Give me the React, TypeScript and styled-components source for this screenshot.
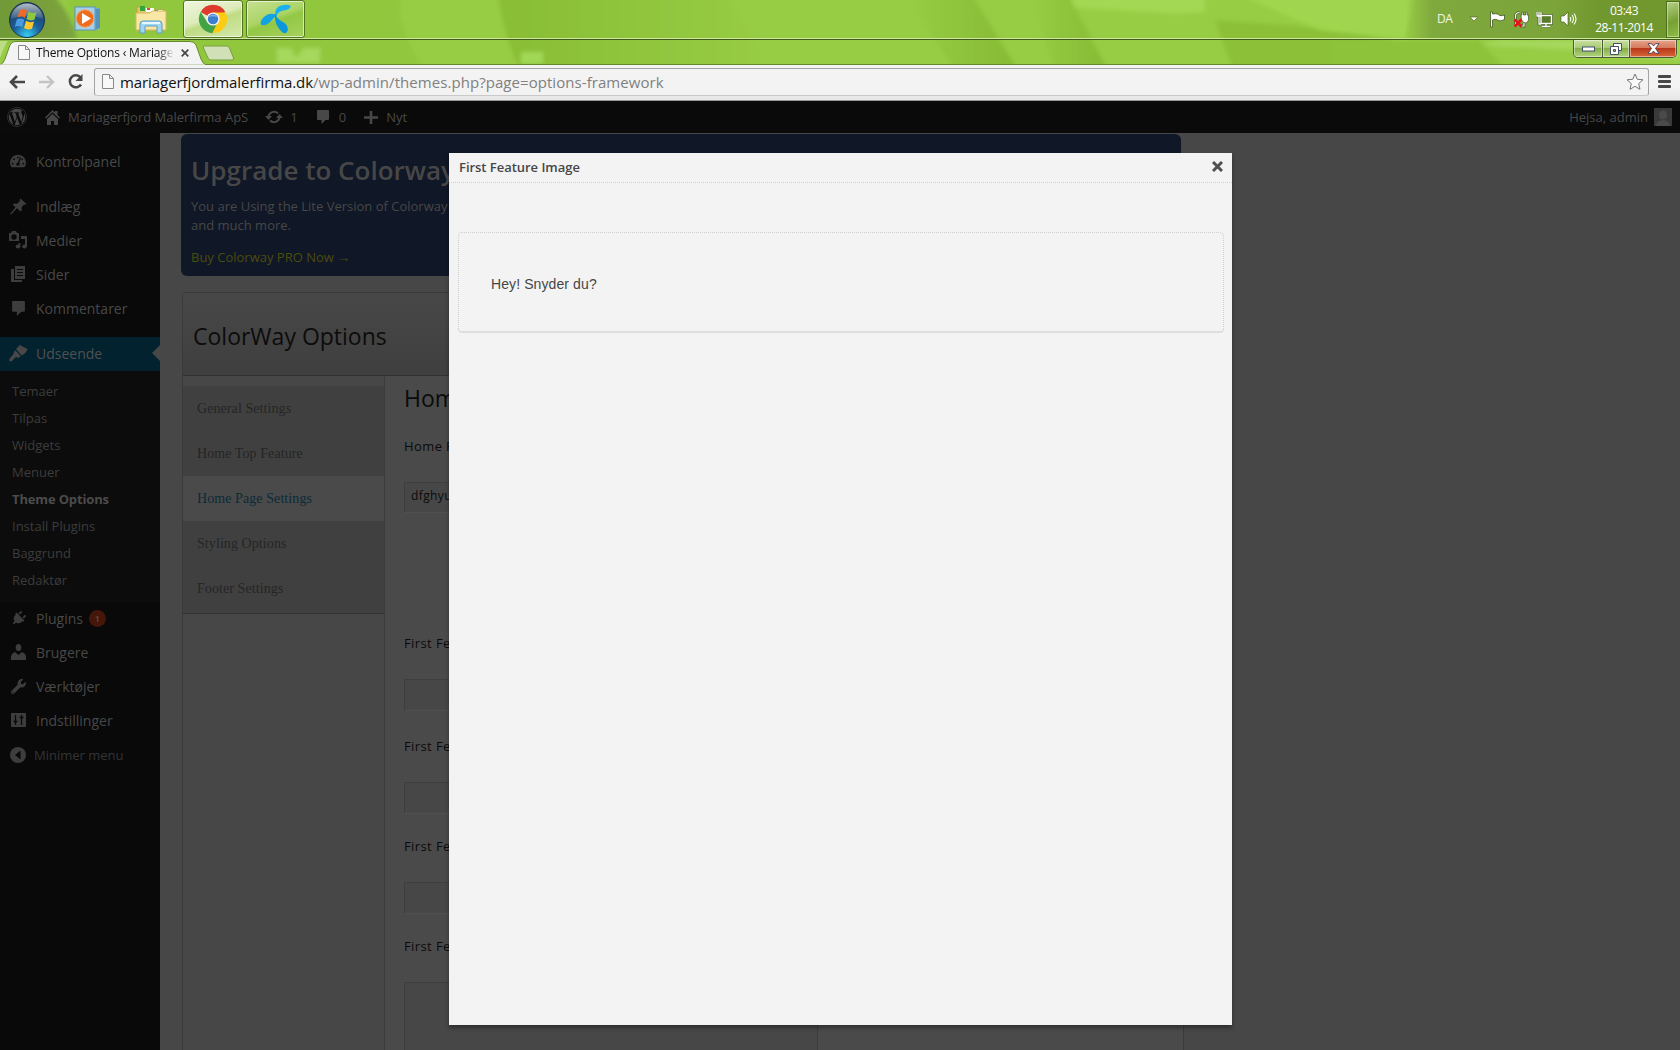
import React from "react";
import styled, { createGlobalStyle, css } from "styled-components";
import { FaWordpress, FaTachometerAlt, FaPlug, FaWrench } from "react-icons/fa";

const Global = createGlobalStyle`
  * { box-sizing: border-box; }
  html, body { margin: 0; padding: 0; background: #474747; overflow: hidden; }
  body { font-family: "Open Sans", "Noto Sans", sans-serif; }
  svg { display: block; flex: none; }
`;

const Desktop = styled.div`
  width: 1680px;
  height: 1050px;
  display: flex;
  flex-direction: column;
  overflow: hidden;
`;

/* ---------- glass frame: taskbar and title strip ---------- */
const Glass = styled.div`
  position: relative;
  height: 65px;
  flex: none;
  background: #97cc45;
`;
const Wallpaper = styled.svg`
  position: absolute;
  inset: 0;
`;
const Taskbar = styled.div`
  position: relative;
  height: 40px;
  display: flex;
  align-items: center;
  border-bottom: 1px solid #405c14;
  box-shadow: inset 0 -1px 0 #cfe8a0;
  padding: 0 0 1px 8px;
`;
const TaskSlot = styled.div<{ $w: number }>`
  width: ${(p) => p.$w}px;
  height: 38px;
  display: flex;
  align-items: center;
  justify-content: center;
`;
const TaskButton = styled(TaskSlot)<{ $active?: boolean }>`
  margin-right: 3px;
  border: 1px solid #54751f;
  border-radius: 3px;
  box-shadow: inset 0 0 0 1px rgba(255, 255, 255, 0.6);
  background: ${(p) =>
    p.$active
      ? "linear-gradient(160deg,#f0f6df 0%,#dcebb9 45%,#bfdc83 55%,#d5e8ac 100%)"
      : "linear-gradient(160deg,#c5e092 0%,#abd466 45%,#93c744 55%,#a7d25e 100%)"};
`;
const Tray = styled.div`
  margin-left: auto;
  height: 38px;
  display: flex;
  align-items: center;
  color: #fff;
  font-size: 12px;
`;
const Lang = styled.span`
  width: 32px;
  font-size: 12px;
  letter-spacing: -0.5px;
  color: #f0f7e0;
  padding-bottom: 2px;
`;
const TrayIcons = styled.div`
  display: flex;
  align-items: center;
  gap: 7px;
  margin-right: 17px;
`;
const Clock = styled.div`
  width: 60px;
  margin-right: 12px;
  text-align: center;
  line-height: 17px;
  font-size: 12px;
  letter-spacing: -0.5px;
`;
const ShowDesktop = styled.div`
  width: 14px;
  height: 37px;
  border: 1px solid #4d6e1c;
  box-shadow: inset 0 0 0 1px rgba(220, 240, 180, 0.55);
  background: linear-gradient(160deg, #b6cf8a, #76a033 55%, #8fbc48);
`;

const TitleStrip = styled.div`
  position: relative;
  height: 25px;
  display: flex;
  box-shadow: inset 0 -1px 0 #62892c;
`;
const TabShape = styled.svg`
  position: absolute;
  left: 0;
  top: 0;
`;
const Tab = styled.div`
  position: relative;
  width: 205px;
  height: 25px;
  padding: 0 0 0 18px;
  display: flex;
  align-items: center;
  font-size: 12px;
  color: #111;
`;
const TabTitle = styled.span`
  width: 138px;
  margin: 0 7px 0 6px;
  white-space: nowrap;
  letter-spacing: -0.17px;
  mask-image: linear-gradient(90deg, #000 122px, transparent 138px);
`;
const WindowButtons = styled.div`
  margin-left: auto;
  margin-right: 3px;
  height: 18px;
  display: flex;
  border: 1px solid #4b5a35;
  border-top: 0;
  border-radius: 0 0 5px 5px;
  overflow: hidden;
  position: relative;
`;
const WinBtn = styled.div<{ $w: number; $close?: boolean }>`
  width: ${(p) => p.$w}px;
  display: flex;
  align-items: center;
  justify-content: center;
  box-shadow: inset 0 0 0 1px rgba(255, 255, 255, 0.45);
  background: ${(p) =>
    p.$close
      ? "linear-gradient(#e5a58c 0%,#d67a5c 45%,#b8371b 50%,#d9673a 100%)"
      : "linear-gradient(#c9e09f 0%,#a9cb75 45%,#86ae4a 50%,#b2d480 100%)"};
  & + & { border-left: 1px solid #4b5a35; }
`;

/* ---------- browser toolbar ---------- */
const Toolbar = styled.div`
  height: 36px;
  flex: none;
  display: flex;
  align-items: center;
  padding: 0 9px 2px 9px;
  background: linear-gradient(#f3f3f3 0, #f3f3f3 60%, #e6e6e6 100%);
  border-bottom: 1px solid #9a9a9a;
`;
const NavIcons = styled.div`
  display: flex;
  align-items: center;
  gap: 12px;
  width: 85px;
`;
const Omnibox = styled.div`
  flex: 1;
  height: 28px;
  margin-right: 9px;
  padding: 0 4px 0 7px;
  display: flex;
  align-items: center;
  background: #f3f3f3;
  border: 1px solid #a3a3a3;
  border-bottom-color: #c9c9c9;
  border-radius: 3px;
`;
const Url = styled.span`
  margin-left: 6px;
  flex: 1;
  font-size: 15px;
  line-height: 20px;
  letter-spacing: 0.06px;
  color: #808080;
  b { font-weight: 400; color: #111; letter-spacing: -0.08px; }
`;

/* ---------- WordPress admin, dimmed behind the dialog ---------- */
const Page = styled.div`
  position: relative;
  flex: 1;
  display: flex;
  flex-direction: column;
  overflow: hidden;
  background: #474747;
`;
const AdminBar = styled.div`
  height: 32px;
  flex: none;
  display: flex;
  align-items: center;
  padding: 0 8px 0 7px;
  background: #0a0a0a;
  color: #484848;
  font-size: 13px;
`;
const BarItem = styled.div<{ $ml: number; $gap: number }>`
  display: flex;
  align-items: center;
  margin-left: ${(p) => p.$ml}px;
  gap: ${(p) => p.$gap}px;
`;
const Account = styled.div`
  margin-left: auto;
  display: flex;
  align-items: center;
  gap: 6px;
`;
const Avatar = styled.div`
  width: 18px;
  height: 18px;
  background: #3a3a3a;
`;
const Body = styled.div`
  flex: 1;
  display: flex;
  min-height: 0;
`;
const Sidebar = styled.nav`
  width: 160px;
  flex: none;
  padding-top: 12px;
  background: #090909;
  color: #484848;
`;
const MenuItem = styled.div<{ $current?: boolean; $dim?: boolean }>`
  position: relative;
  height: 34px;
  padding-bottom: ${(p) => (p.$dim ? 0 : 2)}px;
  display: flex;
  align-items: center;
  font-size: 14px;
  ${(p) => p.$current && css`
    background: #022230;
    color: #505050;
    &::after {
      content: "";
      margin-left: auto;
      border: 8px solid transparent;
      border-right-color: #474747;
      border-left: 0;
    }
  `}
  ${(p) => p.$dim && css`font-size: 13px; color: #343434;`}
`;
const IconCell = styled.span<{ $w?: number; $tone?: string }>`
  width: 36px;
  padding-right: ${(p) => 36 - (p.$w || 36)}px;
  display: flex;
  justify-content: center;
  color: ${(p) => p.$tone || "#3d3d3d"};
`;
const CollapseCell = styled(IconCell)`
  margin-right: -2px;
  padding-right: 0;
  color: #3d3d3d;
`;
const Separator = styled.div`
  height: 11px;
`;
const Submenu = styled.div`
  height: 231px;
  padding: 7px 0 0 12px;
  background: #0c0c0c;
`;
const SubItem = styled.div<{ $bold?: boolean }>`
  height: 27px;
  line-height: 27px;
  font-size: 13px;
  color: ${(p) => (p.$bold ? "#4b4b4b" : "#3c3c3c")};
  font-weight: ${(p) => (p.$bold ? 700 : 400)};
  letter-spacing: ${(p) => (p.$bold ? -0.15 : 0)}px;
`;
const Count = styled.span`
  width: 17px;
  height: 17px;
  margin-left: 6px;
  border-radius: 50%;
  background: #45160a;
  color: #6a4a40;
  font-size: 9px;
  font-weight: 600;
  line-height: 17px;
  text-align: center;
`;

const Main = styled.main`
  width: 1003px;
  margin-left: 21px;
  padding-top: 1px;
  display: flex;
  flex-direction: column;
`;
const Banner = styled.section`
  width: 1000px;
  height: 142px;
  flex: none;
  padding: 18px 12px 0 10px;
  border-radius: 6px;
  background: #101726;
  color: #474747;
  font-size: 13px;
  line-height: 19px;
  white-space: pre;
`;
const BannerTitle = styled.h1`
  margin: 0 0 9px;
  font-size: 26px;
  line-height: 36px;
  font-weight: 600;
`;
const BuyLink = styled.div`
  margin-top: 13px;
  color: #4b4c0e;
`;
const Panel = styled.section`
  flex: 1;
  margin: 16px 0 0 1px;
  display: flex;
  flex-direction: column;
  border: 1px solid #3a3a3a;
  border-bottom: 0;
  border-radius: 4px 4px 0 0;
`;
const PanelHead = styled.header`
  height: 83px;
  flex: none;
  padding: 23px 0 0 10px;
  border-bottom: 1px solid #323232;
  background: linear-gradient(#474747 10px, #424242 50px, #3f3f3f);
  color: #0c0c0c;
  font-size: 23px;
  line-height: 40px;
`;
const PanelBody = styled.div`
  flex: 1;
  display: flex;
`;
const Tabs = styled.div`
  width: 202px;
  flex: none;
  padding-top: 10px;
  border-right: 1px solid #3c3c3c;
`;
const TabList = styled.div`
  padding-bottom: 2px;
  background: #404040;
  border-bottom: 1px solid #323232;
`;
const SideTab = styled.div<{ $active?: boolean }>`
  height: 45px;
  line-height: 45px;
  padding-left: 14px;
  font-family: "Liberation Serif", serif;
  font-size: 14px;
  letter-spacing: 0.08px;
  color: ${(p) => (p.$active ? "#0a2a38" : "#252525")};
  background: ${(p) => (p.$active ? "#4a4a4a" : "#404040")};
`;
const Form = styled.div`
  flex: 1;
  display: flex;
  flex-direction: column;
  padding-left: 19px;
  background: #4a4a4a;
  color: #0b0b0b;
`;
const FormTitle = styled.h2`
  margin: 2px 0 11px;
  font-size: 23px;
  line-height: 40px;
  font-weight: 400;
`;
const Label = styled.div<{ $mt: number }>`
  height: 20px;
  flex: none;
  margin-top: ${(p) => p.$mt}px;
  line-height: 20px;
  font-size: 13px;
  letter-spacing: 0.4px;
`;
const Field = styled.div<{ $h: number; $mt: number }>`
  width: 414px;
  height: ${(p) => p.$h}px;
  flex: none;
  margin-top: ${(p) => p.$mt}px;
  padding-left: 6px;
  line-height: ${(p) => p.$h - 6}px;
  font-size: 12px;
  letter-spacing: 0.4px;
  border: 1px solid #3e3e3e;
  border-bottom-color: #505050;
  background: #474747;
`;

/* ---------- dialog ---------- */
const Dialog = styled.section`
  position: absolute;
  left: 449px;
  top: 52px;
  width: 783px;
  height: 872px;
  background: #f3f3f3;
  box-shadow: 0 3px 4px rgba(0, 0, 0, 0.35);
  color: #464646;
`;
const DialogHead = styled.header`
  height: 30px;
  display: flex;
  justify-content: space-between;
  align-items: center;
  padding: 0 9px 2px 10px;
  border-bottom: 1px dotted #cfcfcf;
  font-size: 13px;
  letter-spacing: -0.03px;
  font-weight: 600;
`;
const Message = styled.div`
  height: 101px;
  margin: 49px 8px 0 9px;
  padding: 40px 0 0 32px;
  border: 1px dotted #cfcfcf;
  border-bottom: 2px solid #dedede;
  border-radius: 4px;
  font-family: "Liberation Sans", Arial, sans-serif;
  font-size: 14px;
  letter-spacing: 0.1px;
  line-height: 22px;
`;

const WallpaperArt = () => (
  <Wallpaper width="1680" height="65" viewBox="0 0 1680 65">
    <defs>
      <linearGradient id="w1" x1="0" x2="1"><stop offset="0" stopColor="#88bd35" /><stop offset="1" stopColor="#97cc45" /></linearGradient>
      <linearGradient id="w2" x1="0" x2="1"><stop offset="0" stopColor="#97cc45" /><stop offset="1" stopColor="#86ba35" /></linearGradient>
      <linearGradient id="w3" x1="0" x2="1"><stop offset="0" stopColor="#6f9837" /><stop offset="1" stopColor="#7ea43d" /></linearGradient>
      <linearGradient id="w4" x1="0" x2="1"><stop offset="0" stopColor="#7fa93d" stopOpacity="0" /><stop offset=".1" stopColor="#7fa93d" /><stop offset=".55" stopColor="#7ba43a" /><stop offset=".7" stopColor="#71982e" /><stop offset="1" stopColor="#71982e" /></linearGradient>
      <filter id="soft"><feGaussianBlur stdDeviation="2" /></filter>
    </defs>
    <rect width="1680" height="65" fill="#97cc45" />
    <g filter="url(#soft)">
      <path d="M-10-10H50Q72 15 78 40H-10Z" fill="url(#w3)" />
      <path d="M62-10H405Q388 15 428 75H180V40H78Z" fill="#91c73e" />
      <path d="M498-5H730Q745 30 775 70H520Q505 40 498-5Z" fill="url(#w1)" />
      <path d="M905-5H972L1018 70H955Z" fill="url(#w2)" />
      <path d="M1030-5H1068L1108 70H1055Z" fill="url(#w2)" />
      <path d="M1070-5H1205V12L1180 14L1075 8Z" fill="#a2d853" />
      <path d="M1215 20L1300 26L1400 40L1470 75H1235Z" fill="#8bc038" />
      <path d="M1240-5H1415L1405 40L1320 30Z" fill="#a0d64f" />
      <path d="M1330 40H1480L1510 75H1330Z" fill="#8dc23a" />
      <path d="M1480 45L1570 50L1680 60V40H1500Z" fill="#a5d85b" />
      <path d="M277 48h14l5 10 8-10h16v15H277z" fill="#a6d85d" />
      <path d="M521 52h22v12H521z" fill="#a1d857" />
    </g>
    <rect x="1405" width="275" height="39" fill="url(#w4)" />
  </Wallpaper>
);

const WinOrb = () => (
  <svg width="38" height="38" viewBox="0 0 38 38">
    <defs>
      <radialGradient id="orb" cx=".5" cy=".95" r=".8"><stop offset="0" stopColor="#35d0f5" /><stop offset=".5" stopColor="#1b5f9b" /><stop offset="1" stopColor="#1f4265" /></radialGradient>
      <linearGradient id="orbg" x1="0" y1="0" x2="0" y2="1"><stop offset="0" stopColor="#fff" stopOpacity=".65" /><stop offset="1" stopColor="#fff" stopOpacity=".1" /></linearGradient>
    </defs>
    <circle cx="19" cy="20" r="17.500" fill="url(#orb)" stroke="#1a3550" />
    <path d="M3 19a16 15.500 0 0 1 32 0q-16-7-32 0z" fill="url(#orbg)" />
    <path d="M11.500 10.500q4-3 7.500 0l-2 7.500q-3.500-2.500-7.500-.5z" fill="#ee6a2c" />
    <path d="M20.500 11.500q3.500 2.500 8 .5l-2 7.500q-4 2-8-.5z" fill="#8fc73e" />
    <path d="M8.800 19.500q3.700-2 7.500.3l-2 7.400q-3.500-2.200-7.500-.4z" fill="#4b9be0" />
    <path d="M18 20.800q3.800 2.500 8 .7l-2 7.300q-4.200 1.800-8-.7z" fill="#fcc62c" />
  </svg>
);
const MediaIcon = () => (
  <svg width="28" height="28" viewBox="0 0 28 28">
    <path d="M5 2l21 1v20l-3 2H6z" fill="#6ea9cf" /><path d="M23 4v20M25 4v19" stroke="#3d7ca8" />
    <rect x="1" y="2" width="20" height="23" fill="#a5d0ea" stroke="#5b94ba" />
    <circle cx="11" cy="13.500" r="8.700" fill="#ef6c1c" stroke="#f8a261" />
    <path d="M8 8l9 5.500-9 5.500z" fill="#fff" />
  </svg>
);
const ExplorerIcon = () => (
  <svg width="32" height="30" viewBox="0 0 32 30">
    <path d="M2 3h9l2 3h16v20H2z" fill="#e6c766" stroke="#c4a146" />
    <path d="M5 2h5v5H5z" fill="#2da83b" /><path d="M11 4h8v4h-8z" fill="#fff" /><path d="M12 4h3v2h-3z" fill="#db4d28" /><path d="M20 6h8v4h-8z" fill="#fff" /><path d="M20 6h3v2h-3z" fill="#2e82c7" />
    <path d="M1 9h14l2-2h14v19H1z" fill="#f9e7a5" stroke="#d5b763" />
    <path d="M5 29v-9q0-3 3-3h16q3 0 3 3v9h-5v-7H10v7z" fill="#a2d5ef" stroke="#5a9fc9" />
    <path d="M7 19h18" stroke="#e9f8ff" strokeWidth="2" />
  </svg>
);
const ChromeIcon = () => (
  <svg width="30" height="30" viewBox="0 0 30 30">
    <path d="M15 15L2.700 7.900A14.200 14.200 0 0 1 27.300 7.900Z" fill="#dd3b2e" />
    <path d="M15 8.500H27.600A14.200 14.200 0 0 1 14.800 29.200L15 20Z" fill="#fccb13" />
    <path d="M2.700 7.900L9.500 18.500 18.500 20.500 14.300 29.200A14.200 14.200 0 0 1 2.700 7.900Z" fill="#42a346" />
    <circle cx="15" cy="15" r="6.600" fill="#f5f5f5" /><circle cx="15" cy="15" r="5.200" fill="#3c7fd0" />
    <path d="M10.500 13q4.500-4.500 9 0-4.500-1.500-9 0z" fill="#8bb8ea" />
  </svg>
);
const TelenorIcon = () => (
  <svg width="32" height="30" viewBox="0 0 32 30">
    <path d="M15 11Q15 3 21 1.500Q27 0 30.500 1.500Q31 5 26 6Q18 7 17 11Z" fill="#1bb0ee" />
    <path d="M16 10.500Q9 8 4 13Q-1 18 1.500 21Q7 22 11 17Q14 13 17 12Z" fill="#12a3e4" />
    <path d="M15 10Q17 15 22 17.500Q29 21 27.500 27Q26 30.500 22.500 28.500Q14 21 15 10Z" fill="#0a97dc" />
  </svg>
);
const PageIcon = () => (
  <svg width="12" height="15" viewBox="0 0 12 15" fill="#f8f8f8" stroke="#888"><path d="M.5.5h7l4 4v10H.5zM7.500.5v4h4" /></svg>
);

const PinIcon = () => (
  <svg width="17" height="17" viewBox="0 0 17 17" fill="currentColor"><path d="M10.500.5l6 5.500-1.500.8-1-.3-2.500 3 .3 2.700-1.300 1.300-3.500-3.200L1 16.500 0 16l5.500-6.800L2.800 6.700 4 5.500l3 .2 2.900-2.600-.4-1z" /></svg>
);
const BrushIcon = () => (
  <svg width="19" height="17" viewBox="0 0 19 17" fill="currentColor"><path d="M7 4l4-4q3 2 7.500 4-1 4-6 6.500zM6 5l5.500 6-2 2-2-1q-2 .5-3.500 3-1 1.500-3 1.500-1.500-1 0-3.500Q4 10 4.500 8.500z" /></svg>
);
const MediaMenuIcon = () => (
  <svg width="18" height="18" viewBox="0 0 18 18" fill="currentColor"><path fillRule="evenodd" d="M0 2h2l1-2h4l1 2h2v8H0zM5 3.300a2.700 2.700 0 1 0 0 5.400 2.700 2.700 0 0 0 0-5.400z" /><path d="M12 5h6v10h-2V8h-4z" /><ellipse cx="15.500" cy="15.500" rx="2.300" ry="2" /><ellipse cx="9" cy="15.500" rx="2.300" ry="2" /><path d="M9.500 12h1.800v4H9.500z" /></svg>
);
const PagesIcon = () => (
  <svg width="14" height="16" viewBox="0 0 14 16" fill="currentColor"><path fillRule="evenodd" d="M4 0h10v13H4zM6 3v1h6V3zM6 6v1h6V6zM6 9v1h6V9z" /><path d="M0 3h3v11h8v2H0z" /></svg>
);
const CommentIcon = ({ size = 14 }: { size?: number }) => (
  <svg width={size} height={size} viewBox="0 0 14 14" fill="currentColor"><path d="M2 0h10q1 0 1 1v8q0 1-1 1H9.500L5.500 14V10H2Q1 10 1 9V1q0-1 1-1z" /></svg>
);
const UserIcon = () => (
  <svg width="15" height="16" viewBox="0 0 15 16" fill="currentColor"><ellipse cx="7.500" cy="3.500" rx="2.800" ry="3.500" /><path d="M0 16v-4q1-3 4-4l3.500 3L11 8q3 1 4 4v4z" /></svg>
);
const SettingsIcon = () => (
  <svg width="15" height="14" viewBox="0 0 15 14"><rect width="15" height="14" rx="1" fill="currentColor" /><path d="M4.500 2v10M10.500 2v10M2.500 8.500h4M8.500 4.500h4" stroke="#090909" strokeWidth="1.300" /></svg>
);
const CollapseIcon = () => (
  <svg width="16" height="16" viewBox="0 0 16 16"><circle cx="8" cy="8" r="8" fill="currentColor" /><path d="M10.500 3.500v9L5 8z" fill="#090909" /></svg>
);

const Rot = styled.span<{ $deg: number }>`
  display: flex;
  transform: rotate(${(p) => p.$deg}deg);
`;
const CaretIcon = styled.svg`
  margin-right: 3px;
`;

const topMenu = [
  { label: "Indlæg", icon: <PinIcon /> },
  { label: "Medier", icon: <MediaMenuIcon /> },
  { label: "Sider", icon: <PagesIcon /> },
  { label: "Kommentarer", icon: <CommentIcon size={15} /> },
];
const submenu = ["Temaer", "Tilpas", "Widgets", "Menuer", "Theme Options", "Install Plugins", "Baggrund", "Redaktør"];
const bottomMenu = [
  { label: "Plugins", icon: <Rot $deg={45}><FaPlug size={15} /></Rot>, count: 1 },
  { label: "Brugere", icon: <UserIcon /> },
  { label: "Værktøjer", icon: <FaWrench size={15} /> },
  { label: "Indstillinger", icon: <SettingsIcon /> },
];
const tabs = ["General Settings", "Home Top Feature", "Home Page Settings", "Styling Options", "Footer Settings"];

export default function App() {
  return (
    <Desktop>
      <Global />
      <Glass>
        <WallpaperArt />
        <Taskbar>
          <TaskSlot $w={38}><WinOrb /></TaskSlot>
          <TaskSlot $w={84}><MediaIcon /></TaskSlot>
          <TaskSlot $w={41}><ExplorerIcon /></TaskSlot>
          <TaskSlot $w={12} />
          <TaskButton $w={60} $active><ChromeIcon /></TaskButton>
          <TaskButton $w={59}><TelenorIcon /></TaskButton>
          <Tray>
            <Lang>DA</Lang>
            <TrayIcons>
              <CaretIcon width="10" height="6" viewBox="0 0 10 6"><path d="M1 1h8L5 5z" fill="#fff" stroke="#45601a" strokeWidth=".6" /></CaretIcon>
              <svg width="17" height="17" viewBox="0 0 17 17"><path d="M1.500 1v15h2V9q3-1.500 5 0 3 2 7-.5V4q-3 1-5 .5-1-2.500-7-1.500V1z" fill="#fff" stroke="#3f5420" strokeWidth=".8" /></svg>
              <svg width="16" height="17" viewBox="0 0 16 17"><path d="M2.500 13V5q0-3.500 4-3.500M7 15h4v-3" fill="none" stroke="#3f5420" strokeWidth="2.600" /><path d="M2.500 13V5q0-3.500 4-3.500M7 15h4v-3" fill="none" stroke="#fff" strokeWidth="1.200" /><path d="M8 4h1V1h1.500v3h2V1H14v3h1.500v5q-1 3-3 3t-4-3z" fill="#fff" stroke="#3f5420" strokeWidth=".7" /><path d="M1.500 8.500l7 7M8.500 8.500l-7 7" stroke="#e8121a" strokeWidth="2.600" /></svg>
              <svg width="17" height="17" viewBox="0 0 17 17"><path d="M5 4.500h10.500v8H5zM6 15.500h8M10 13v2M1 1v4h4V1M3 1v12h2" fill="none" stroke="#3f5420" strokeWidth="2.600" /><rect x="5" y="4.500" width="10.500" height="8" fill="#587c2b" stroke="#fff" strokeWidth="1.400" /><path d="M6 15.500h8M10 13v2M1 1v4h4V1M3 1v12h2" fill="none" stroke="#fff" strokeWidth="1.300" /></svg>
              <svg width="17" height="16" viewBox="0 0 17 16"><path d="M1 5h3l4-4v14l-4-4H1z" fill="#fff" stroke="#3f5420" strokeWidth=".6" /><path d="M10 6q1.500 2 0 4.500M12 4q3 4 0 8M14 2.500q4 5.500 0 11" fill="none" stroke="#fff" strokeWidth="1.100" /></svg>
            </TrayIcons>
            <Clock>03:43<br />28-11-2014</Clock>
            <ShowDesktop />
          </Tray>
        </Taskbar>
        <TitleStrip>
          <TabShape width="240" height="25" viewBox="0 0 240 25">
            <path d="M0 1h8Q6 2 0 18z" fill="#bcdc87" />
            <path d="M0 25Q3 24 5 19L10 5Q12 1.500 15 1.500H190Q194 1.500 196 5L201 19Q203 24 206 25z" fill="#f3f3f3" stroke="#67892f" />
            <rect y="24.500" width="205" height="1" fill="#f3f3f3" />
            <path d="M203.500 8q-1-2 1-2h22q2 0 3 2l4 10q.5 2-1.500 2h-21q-2 0-3-2z" fill="#d2e0b8" stroke="#79a03f" />
          </TabShape>
          <Tab>
            <PageIcon />
            <TabTitle>Theme Options ‹ Mariager</TabTitle>
            <svg width="8" height="8" viewBox="0 0 8 8" stroke="#454545" strokeWidth="1.700"><path d="M.7.7l6.600 6.600M7.300.7L.7 7.300" /></svg>
          </Tab>
          <WindowButtons>
            <WinBtn $w={28}><svg width="13" height="6" viewBox="0 0 13 6"><rect x=".5" y="1" width="12" height="4" fill="#fff" stroke="#45506a" /></svg></WinBtn>
            <WinBtn $w={27}><svg width="13" height="12" viewBox="0 0 13 12" fill="#fff" stroke="#45506a"><path d="M3.500.5h8v7h-8z" /><path d="M.5 3.500h8v8h-8z" /><path d="M3.500 6.500h2v2h-2z" fill="#8caf58" /></svg></WinBtn>
            <WinBtn $w={47} $close><svg width="13" height="11" viewBox="0 0 13 11"><path d="M1 .7h3.500l2 2.200 2-2.200H12L8.500 5.500 12 10.300H8.500l-2-2.200-2 2.200H1l3.500-4.800z" fill="#fff" stroke="#4c3c4c" strokeWidth=".9" /></svg></WinBtn>
          </WindowButtons>
        </TitleStrip>
      </Glass>

      <Toolbar>
        <NavIcons>
          <svg width="17" height="14" viewBox="0 0 17 14" fill="none" stroke="#474747" strokeWidth="2.600"><path d="M16 7H3M8 1L2 7l6 6" /></svg>
          <svg width="17" height="14" viewBox="0 0 17 14" fill="none" stroke="#c4c4c4" strokeWidth="2.400"><path d="M1 7h13M9 1l6 6-6 6" /></svg>
          <svg width="17" height="16" viewBox="0 0 17 16"><path d="M13.500 3.500A6 6 0 1 0 14 10.500" fill="none" stroke="#474747" strokeWidth="2.500" /><path d="M15.500 0v7h-7z" fill="#474747" /></svg>
        </NavIcons>
        <Omnibox>
          <PageIcon />
          <Url><b>mariagerfjordmalerfirma.dk</b>/wp-admin/themes.php?page=options-framework</Url>
          <svg width="18" height="17" viewBox="0 0 18 17" fill="#fafafa" stroke="#777"><path d="M9 1l2.300 5.300 5.700.5-4.300 3.800 1.300 5.700L9 13.300l-5 3 1.300-5.700L1 6.800l5.700-.5z" /></svg>
        </Omnibox>
        <svg width="13" height="13" viewBox="0 0 13 13" fill="#484848"><rect width="13" height="3" rx="1" /><rect y="5" width="13" height="3" rx="1" /><rect y="10" width="13" height="3" rx="1" /></svg>
      </Toolbar>

      <Page>
        <AdminBar>
          <FaWordpress size={20} />
          <BarItem $ml={18} $gap={8}>
            <svg width="15" height="15" viewBox="0 0 15 15" fill="currentColor"><path d="M7.500 0L10 2.400V1h2.500v4L15 7.500l-1 1L7.500 2.300 1 8.500l-1-1z" /><path d="M2 9l5.500-5.200L13 9v6H9v-4H6v4H2z" /></svg>
            Mariagerfjord Malerfirma ApS
          </BarItem>
          <BarItem $ml={17} $gap={7}>
            <svg width="18" height="14" viewBox="0 0 18 14" fill="none" stroke="currentColor" strokeWidth="2"><path d="M3.500 7A5.500 5.500 0 0 1 13 3.500M14.500 7A5.500 5.500 0 0 1 5 10.500" /><path d="M0 6h7L3.500 10zM11 8h7l-3.500-4z" fill="currentColor" stroke="none" /></svg>
            1
          </BarItem>
          <BarItem $ml={18} $gap={9}>
            <CommentIcon />0
          </BarItem>
          <BarItem $ml={18} $gap={8}>
            <svg width="14" height="13" viewBox="0 0 14 13"><path d="M7 0v13M0 6.500h14" stroke="currentColor" strokeWidth="2.600" /></svg>
            Nyt
          </BarItem>
          <Account>
            Hejsa, admin
            <Avatar><svg width="18" height="18" viewBox="0 0 18 18" fill="#4a4a4a"><ellipse cx="9" cy="7" rx="4" ry="4.500" /><path d="M2 18q0-5 7-6 7 1 7 6z" /></svg></Avatar>
          </Account>
        </AdminBar>
        <Body>
          <Sidebar>
            <MenuItem><IconCell><FaTachometerAlt size={16} /></IconCell>Kontrolpanel</MenuItem>
            <Separator />
            {topMenu.map((m) => (
              <MenuItem key={m.label}><IconCell>{m.icon}</IconCell>{m.label}</MenuItem>
            ))}
            <Separator />
            <MenuItem $current><IconCell $tone="#484848"><BrushIcon /></IconCell>Udseende</MenuItem>
            <Submenu>
              {submenu.map((s) => (
                <SubItem key={s} $bold={s === "Theme Options"}>{s}</SubItem>
              ))}
            </Submenu>
            {bottomMenu.map((m) => (
              <MenuItem key={m.label}>
                <IconCell>{m.icon}</IconCell>{m.label}
                {m.count && <Count>{m.count}</Count>}
              </MenuItem>
            ))}
            <MenuItem $dim><CollapseCell><CollapseIcon /></CollapseCell>Minimer menu</MenuItem>
          </Sidebar>
          <Main>
            <Banner>
              <BannerTitle>Upgrade to Colorway</BannerTitle>
              {"You are Using the Lite Version of Colorway\nand much more."}
              <BuyLink>Buy Colorway PRO Now →</BuyLink>
            </Banner>
            <Panel>
              <PanelHead>ColorWay Options</PanelHead>
              <PanelBody>
                <Tabs>
                  <TabList>
                    {tabs.map((t) => (
                      <SideTab key={t} $active={t === "Home Page Settings"}>{t}</SideTab>
                    ))}
                  </TabList>
                </Tabs>
                <Form>
                  <FormTitle>Home</FormTitle>
                  <Label $mt={7}>Home Page</Label>
                  <Field $mt={26} $h={31}>dfghyu</Field>
                  <Label $mt={120}>First Feature</Label>
                  <Field $mt={26} $h={32}></Field>
                  <Label $mt={25}>First Feature</Label>
                  <Field $mt={26} $h={32}></Field>
                  <Label $mt={22}>First Feature</Label>
                  <Field $mt={26} $h={32}></Field>
                  <Label $mt={22}>First Feature</Label>
                  <Field $mt={26} $h={120}></Field>
                </Form>
              </PanelBody>
            </Panel>
          </Main>
        </Body>
        <Dialog>
          <DialogHead>
            First Feature Image
            <svg width="11" height="11" viewBox="0 0 11 11" stroke="#505050" strokeWidth="3"><path d="M1 1l9 9M10 1l-9 9" /></svg>
          </DialogHead>
          <Message>Hey! Snyder du?</Message>
        </Dialog>
      </Page>
    </Desktop>
  );
}
